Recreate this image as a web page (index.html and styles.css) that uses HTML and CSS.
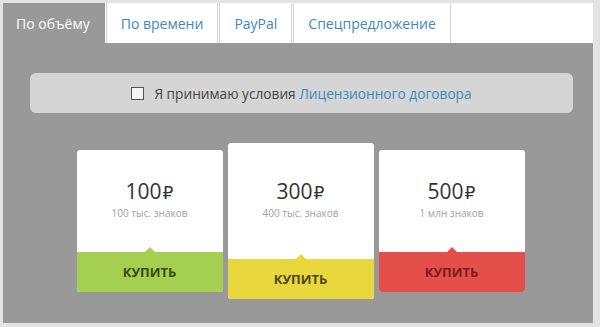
FILE: index.html
```html
<!DOCTYPE html>
<html lang="ru">
<head>
    <meta charset="UTF-8">
    <meta name="viewport" content="width=device-width, initial-scale=1.0">
    <title>Тарифы</title>
    <link rel="stylesheet" href="styles.css">
</head>
<body>
    <div class="widget">
        <ul class="tabs">
            <li class="tab active">По объёму</li>
            <li class="tab"><a href="#">По времени</a></li>
            <li class="tab"><a href="#">PayPal</a></li>
            <li class="tab"><a href="#">Спецпредложение</a></li>
        </ul>
        <div class="tab-content">
            <label class="agree">
                <span class="checkbox"></span>
                <span>Я принимаю условия <a href="#">Лицензионного договора</a></span>
            </label>
            <div class="plans">
                <div class="plan green">
                    <div class="plan-info">
                        <div class="price">100<span class="rub">₽</span></div>
                        <div class="volume">100 тыс. знаков</div>
                    </div>
                    <a class="buy" href="#">КУПИТЬ</a>
                </div>
                <div class="plan yellow featured">
                    <div class="plan-info">
                        <div class="price">300<span class="rub">₽</span></div>
                        <div class="volume">400 тыс. знаков</div>
                    </div>
                    <a class="buy" href="#">КУПИТЬ</a>
                </div>
                <div class="plan red">
                    <div class="plan-info">
                        <div class="price">500<span class="rub">₽</span></div>
                        <div class="volume">1 млн знаков</div>
                    </div>
                    <a class="buy" href="#">КУПИТЬ</a>
                </div>
            </div>
        </div>
    </div>
</body>
</html>
```

FILE: styles.css
```css
body, html {
    height: 100%;
    margin: 0;
    font-family: "Open Sans", Arial, sans-serif;
    background-color: #e3e3e3;
    overflow: hidden;
}
.widget {
    margin: 3px 7px 4px 3px;
    height: 320px;
    display: flex;
    flex-direction: column;
}
.tabs {
    list-style: none;
    margin: 0;
    padding: 0;
    height: 40px;
    display: flex;
    background-color: #fff;
}
.tab {
    display: flex;
    align-items: center;
    padding: 0 14px;
    font-size: 14px;
    border-right: 1px solid #d4d4d4;
    border-left: 1px solid #d4d4d4;
    margin-right: 1px;
    background-color: #fff;
}
.tab a {
    color: #3d88bf;
    text-decoration: none;
}
.tab.active {
    background-color: #999;
    color: #fff;
    border-color: #999;
    padding: 0 14px 0 12px;
}
.tab-content {
    flex: 1;
    background-color: #999;
    padding-top: 30px;
}
.agree {
    margin: 0 20px 0 27px;
    height: 40px;
    background-color: #d5d5d5;
    border-radius: 6px;
    display: flex;
    align-items: center;
    justify-content: center;
    gap: 10px;
    font-size: 13.7px;
    color: #444;
}
.agree a {
    color: #3d88bf;
    text-decoration: none;
}
.checkbox {
    width: 11px;
    height: 11px;
    border: 1px solid #555;
    background-color: #f4f4f4;
}
.plans {
    display: flex;
    justify-content: center;
    align-items: center;
    gap: 5px;
    margin-top: 30px;
    padding-left: 5px;
}
.plan {
    width: 146px;
    height: 142px;
    background-color: #fff;
    border-radius: 3px;
    display: flex;
    flex-direction: column;
}
.plan.featured {
    height: 156px;
}
.plan-info {
    flex: 1;
    display: flex;
    flex-direction: column;
    align-items: center;
    justify-content: center;
    padding-bottom: 4px;
}
.price {
    font-size: 21px;
    color: #333;
    line-height: 24px;
}
.rub {
    font-family: "DejaVu Sans", sans-serif;
    font-size: 17px;
    margin-left: 1px;
}
.volume {
    font-size: 10px;
    color: #a0a0a0;
    margin-top: 1px;
}
.buy {
    position: relative;
    height: 40px;
    display: flex;
    align-items: center;
    justify-content: center;
    font-size: 13px;
    font-weight: bold;
    text-decoration: none;
    border-radius: 0 0 3px 3px;
}
.buy::before {
    content: "";
    position: absolute;
    top: -5px;
    left: 50%;
    margin-left: -5px;
    border-left: 5px solid transparent;
    border-right: 5px solid transparent;
    border-bottom: 5px solid;
    border-bottom-color: inherit;
}
.green .buy {
    background-color: #a5cf51;
    border-color: #a5cf51;
    color: #344a17;
}
.yellow .buy {
    background-color: #e9d83d;
    border-color: #e9d83d;
    color: #4d4614;
}
.red .buy {
    background-color: #e54f4a;
    border-color: #e54f4a;
    color: #7a1c1a;
}
```
